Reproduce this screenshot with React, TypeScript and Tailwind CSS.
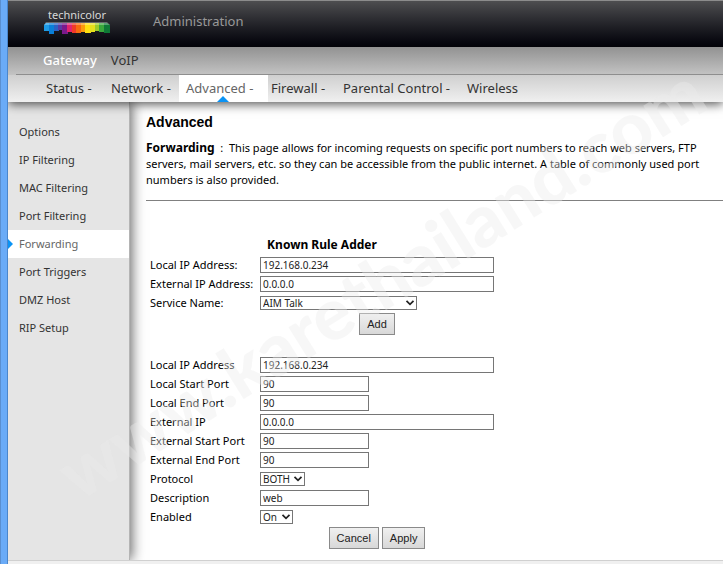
import { useState } from 'react';
import type { ReactNode } from 'react';

const topMenu = [
  { label: 'Status -', width: 'w-[65px]' },
  { label: 'Network -', width: 'w-[76px]' },
  { label: 'Advanced -', width: 'w-[89px]', active: true },
  { label: 'Firewall -', width: 'w-[72px]' },
  { label: 'Parental Control -', width: 'w-[124px]' },
  { label: 'Wireless', width: 'w-[66px]' },
];

const sideMenu = [
  'Options',
  'IP Filtering',
  'MAC Filtering',
  'Port Filtering',
  'Forwarding',
  'Port Triggers',
  'DMZ Host',
  'RIP Setup',
];

function Logo() {
  return (
    <a href="#" className="flex w-[66px] flex-col items-center">
      <span className="text-[11px] leading-[14px] text-[#d8d8d8]">technicolor</span>
      <svg viewBox="0 0 66 13" className="h-[13px] w-[66px]" aria-hidden="true">
        <path d="M2 1H7V10H5V9H0V3Z" fill="#1e9be6" />
        <path d="M5 1H10V12H5Z" fill="#0a7fd8" />
        <path d="M10 1H15V9H10Z" fill="#2b62c4" />
        <path d="M14 1H19V8H14Z" fill="#5a3ba6" />
        <path d="M18 1H24V12H18Z" fill="#7b1a8c" />
        <path d="M23 1H28V10H23Z" fill="#e0246e" />
        <path d="M28 1H33V11H28Z" fill="#f03a28" />
        <path d="M32 1H37V11H32Z" fill="#f56a10" />
        <path d="M37 1H42V10H37Z" fill="#fb9c0c" />
        <path d="M41 1H47V11H41Z" fill="#fde010" />
        <path d="M46 1H51V10H46Z" fill="#e6e01c" />
        <path d="M51 1H56V9H51Z" fill="#9ccb2a" />
        <path d="M55 1H60V10H55Z" fill="#3aa83c" />
        <path d="M60 1H63L66 3V11H60Z" fill="#0e7a36" />
        <path d="M2 0H63L66 3H0Z" fill="#fff" opacity="0.3" />
      </svg>
    </a>
  );
}

function Row({ id, label, children }: { id: string; label: string; children: ReactNode }) {
  return (
    <div className="flex h-[19px] items-center">
      <label htmlFor={id} className="w-[110px] shrink-0 whitespace-nowrap text-[11px] leading-4">
        {label}
      </label>
      {children}
    </div>
  );
}

function TextField({ id, value, wide }: { id: string; value: string; wide?: boolean }) {
  const [text, setText] = useState(value);
  return (
    <input
      id={id}
      type="text"
      value={text}
      onChange={(e) => setText(e.target.value)}
      className={`h-4 border border-[#767676] bg-white px-[2px] pt-px text-[10px] leading-3 text-[#222] ${
        wide ? 'w-[234px]' : 'w-[109px]'
      }`}
    />
  );
}

function SelectField({ id, options, width }: { id: string; options: string[]; width: string }) {
  return (
    <div className={`relative ${width}`}>
      <select
        id={id}
        className="block h-[14px] w-full appearance-none border border-[#767676] bg-white pl-[2px] text-[10px] leading-3 text-[#222]"
      >
        {options.map((option) => (
          <option key={option}>{option}</option>
        ))}
      </select>
      <svg viewBox="0 0 10 6" className="pointer-events-none absolute top-1 right-[2px] h-[6px] w-[10px]" aria-hidden="true">
        <path d="M1.5 0.8L5 4.4L8.5 0.8" fill="none" stroke="#222" strokeWidth="1.7" />
      </svg>
    </div>
  );
}

function Button({ children, type = 'button' }: { children: ReactNode; type?: 'button' | 'submit' }) {
  return (
    <button
      type={type}
      className="h-[22px] border border-[#8a8a8a] bg-gradient-to-b from-[#f0f0f0] to-[#d8d8d8] px-[7px] font-['Liberation_Sans'] text-[11px] leading-4 text-[#222]"
    >
      {children}
    </button>
  );
}

function App() {
  return (
    <div className="relative flex min-h-screen overflow-hidden bg-white font-['Noto_Sans',sans-serif] text-black">
      <div className="relative z-20 w-2 shrink-0 border-r border-l border-r-[#4a86cc] border-l-[#5a8fd0] bg-[#6aabf7]" />

      <div className="flex min-w-0 flex-1 flex-col">
        <header className="relative z-10 shadow-[0_2px_10px_rgba(0,0,0,0.7)]">
          <div className="flex h-[47px] items-start border-t border-[#8c8c8c] bg-gradient-to-b from-[#4e4e50] to-[#030308] pt-[7px] pl-9">
            <Logo />
            <span className="ml-[43px] pt-1 text-[13px] leading-[18px] text-[#999]">Administration</span>
          </div>

          <div className="h-7 bg-gradient-to-b from-[#929292] to-[#c4c4c4] pl-2">
            <nav className="flex h-7 items-center gap-[14px] border-b border-[#8e8e8e] pl-[27px] text-[13px]">
              <a href="#" className="font-medium text-white">Gateway</a>
              <a href="#" className="text-[#333]">VoIP</a>
            </nav>
          </div>

          <nav className="flex h-[27px] bg-gradient-to-b from-[#cfcfcf] to-[#f0f0f0] pl-[38px] text-[13px] text-[#333]">
            {topMenu.map((item) => (
              <a
                key={item.label}
                href="#"
                className={`relative flex items-center whitespace-nowrap ${item.width} ${
                  item.active ? '-ml-2 mr-[3px] bg-white pl-[7px] text-[#666]' : ''
                }`}
              >
                {item.label}
                {item.active && (
                  <svg viewBox="0 0 12 6" className="absolute bottom-0 left-[38px] h-[6px] w-3" aria-hidden="true">
                    <path d="M0 6L6 0L12 6Z" fill="#0a93f5" />
                  </svg>
                )}
              </a>
            ))}
          </nav>
        </header>

        <div className="flex flex-1">
          <aside className="w-[122px] shrink-0 border-r border-[#b4b4b4] bg-[#e5e5e5] pt-4 shadow-[2px_0_12px_rgba(0,0,0,0.6)]">
            <nav className="flex flex-col">
              {sideMenu.map((item) => (
                <a
                  key={item}
                  href="#"
                  className={`relative flex h-7 items-center pl-[11px] text-[11px] ${
                    item === 'Forwarding' ? 'bg-white text-[#666]' : 'text-[#333]'
                  }`}
                >
                  {item === 'Forwarding' && (
                    <svg viewBox="0 0 5 10" className="absolute top-[9px] left-0 h-[10px] w-[5px]" aria-hidden="true">
                      <path d="M0 0L5 5L0 10Z" fill="#0a93f5" />
                    </svg>
                  )}
                  {item}
                </a>
              ))}
            </nav>
          </aside>

          <main className="min-w-0 flex-1 pt-3 pl-4">
            <h1 className="font-['Liberation_Sans'] text-[14px] leading-4 font-bold">Advanced</h1>
            <p className="mt-[10px] text-[11px] leading-4">
              <b className="text-[12px] leading-none">Forwarding</b> &nbsp;:&nbsp; This page allows for incoming requests
              on specific port numbers to reach web servers, FTP servers, mail servers, etc. so they can be accessible
              from the public internet. A table of commonly used port numbers is also provided.
            </p>
            <hr className="mt-3 border-[#808080]" />

            <form className="mt-9 ml-1 w-[344px]" onSubmit={(e) => e.preventDefault()}>
              <h2 className="text-center text-[12px] leading-4 font-bold">Known Rule Adder</h2>
              <div className="mt-[2px]">
                <Row id="known-local" label="Local IP Address:">
                  <TextField id="known-local" value="192.168.0.234" wide />
                </Row>
                <Row id="known-external" label="External IP Address:">
                  <TextField id="known-external" value="0.0.0.0" wide />
                </Row>
                <Row id="service" label="Service Name:">
                  <SelectField id="service" options={['AIM Talk']} width="w-[157px]" />
                </Row>
              </div>
              <div className="mt-px flex justify-center pl-[110px]">
                <Button>Add</Button>
              </div>
            </form>

            <form className="mt-5 ml-1 w-[344px]" onSubmit={(e) => e.preventDefault()}>
              <Row id="local-ip" label="Local IP Address">
                <TextField id="local-ip" value="192.168.0.234" wide />
              </Row>
              <Row id="local-start" label="Local Start Port">
                <TextField id="local-start" value="90" />
              </Row>
              <Row id="local-end" label="Local End Port">
                <TextField id="local-end" value="90" />
              </Row>
              <Row id="external-ip" label="External IP">
                <TextField id="external-ip" value="0.0.0.0" wide />
              </Row>
              <Row id="external-start" label="External Start Port">
                <TextField id="external-start" value="90" />
              </Row>
              <Row id="external-end" label="External End Port">
                <TextField id="external-end" value="90" />
              </Row>
              <Row id="protocol" label="Protocol">
                <SelectField id="protocol" options={['BOTH']} width="w-[45px]" />
              </Row>
              <Row id="description" label="Description">
                <TextField id="description" value="web" />
              </Row>
              <Row id="enabled" label="Enabled">
                <SelectField id="enabled" options={['On']} width="w-[33px]" />
              </Row>
              <div className="mt-px flex justify-center gap-[3px] pl-[110px]">
                <Button>Cancel</Button>
                <Button type="submit">Apply</Button>
              </div>
            </form>
          </main>
        </div>

        <footer className="h-1 border-t border-[#d0d0d0] bg-[#f0f0f0]" />
      </div>

      {/* Watermark */}
      <div className="pointer-events-none absolute top-[281px] left-[380px] z-20 -translate-x-1/2 -translate-y-1/2 -rotate-[32deg] font-['Lato'] text-[72px] leading-none font-black whitespace-nowrap text-[#ececec]/40">
        www.karethailand.com
      </div>
    </div>
  );
}

export default App;
